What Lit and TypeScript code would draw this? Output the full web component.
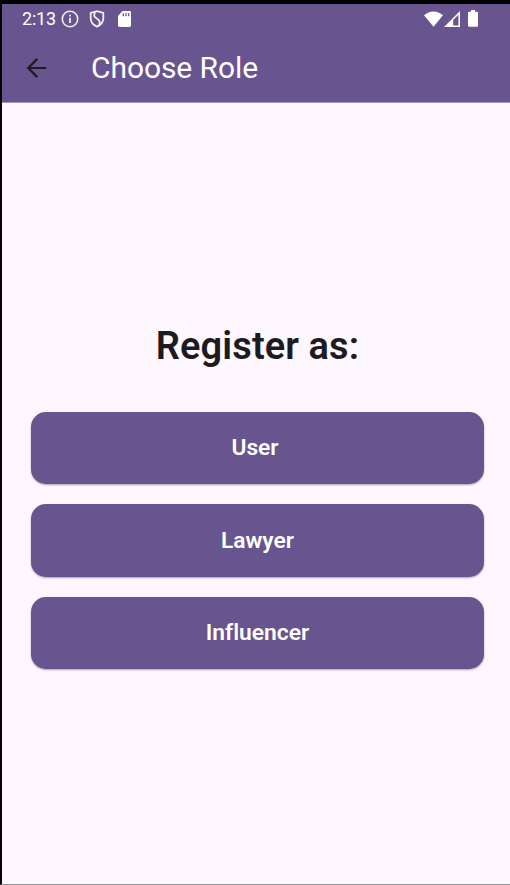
import { LitElement, html, css } from "lit";
import { customElement } from "lit/decorators.js";

@customElement("app-root")
export class AppRoot extends LitElement {
  static styles = css`
    :host {
      display: flex;
      flex-direction: column;
      box-sizing: border-box;
      width: 510px;
      height: 885px;
      overflow: hidden;
      border-top: 4px solid #000;
      border-left: 2px solid #000;
      border-bottom: 1px solid #979398;
      background: #fef7ff;
      font-family: Roboto, "Liberation Sans", sans-serif;
      font-variant-ligatures: none;
      color: #1d1b20;
    }
    svg { display: block; flex: none; }
    .header {
      flex: none;
      height: 98px;
      background: #68548e;
      border-bottom: 1px solid #a598ba;
      color: #fff;
    }
    .status {
      display: flex;
      align-items: center;
      height: 29px;
      padding: 0 32px 0 20px;
    }
    .time { font-size: 18px; line-height: 29px; width: 39px; white-space: nowrap; letter-spacing: -0.2px; }
    .shield { margin-left: 10px; }
    .card { margin-left: 13px; }
    .wifi { margin-left: auto; }
    .signal { margin-left: 1px; }
    .battery { margin-left: 8px; }
    .bar { display: flex; align-items: center; height: 70px; padding-left: 24px; }
    .title { margin: 0 0 0 43px; font-size: 30px; font-weight: 400; line-height: 70px; letter-spacing: -0.08px; white-space: nowrap; }
    .content {
      flex: 1;
      display: flex;
      flex-direction: column;
      padding: 217px 26px 0 29px;
    }
    .heading { margin: 0 0 40px; text-align: center; font-size: 38px; font-weight: 600; letter-spacing: 0.1px; line-height: 52px; white-space: nowrap; }
    .roles { display: flex; flex-direction: column; gap: 20px; }
    .role {
      height: 72.400px;
      border: 0;
      padding: 0;
      border-radius: 15px;
      background: #68548e;
      color: #fff;
      font: 600 22.800px/72px Roboto, "Liberation Sans", sans-serif;
      font-variant-ligatures: none;
      text-align: center;
      box-shadow: 0 1px 2px rgba(0, 0, 0, 0.35);
    }
    .role:first-child { padding-right: 5px; }
  `;

  render() {
    return html`
      <header class="header">
        <div class="status">
          <span class="time">2:13</span>
          <svg width="18" height="18" viewBox="0 0 18 18" fill="none" stroke="#f1eef5">
            <circle cx="9" cy="9" r="7.7" stroke-width="1.6" />
            <path d="M9 7.8v5.2M9 4.7v1.8" stroke-width="1.8" />
          </svg>
          <svg class="shield" width="16" height="18" viewBox="0 0 16 18" fill="none" stroke="#f1eef5" stroke-width="1.8">
            <path d="M8 1.200 14.300 3V8.200C14.300 12.200 11.500 15 8 16.600 4.500 15 1.700 12.200 1.700 8.200V3Z" />
            <path d="M6 2.200C4.300 6.400 5.500 7.200 8.100 8.800C10.700 10.400 11.600 12 10.200 15" />
          </svg>
          <svg class="card" width="13" height="16" viewBox="0 0 13 16">
            <path fill="#fff" d="M4.500 0h7.200A1.300 1.300 0 0 1 13 1.300v13.200a1.400 1.400 0 0 1-1.400 1.400H1.400A1.400 1.400 0 0 1 0 14.500V5Z" />
            <path stroke="#68548e" stroke-width="1.300" d="M5.300 2.200v3M8 2.200v3M10.600 2.200v3" />
          </svg>
          <svg class="wifi" width="19" height="16" viewBox="0 0 19 16">
            <path fill="#fff" d="M0 4.200C5.400-.9 13.600-.9 19 4.200L9.500 15.700Z" />
          </svg>
          <svg class="signal" width="16" height="16" viewBox="0 0 16 16">
            <path fill="#fff" fill-rule="evenodd" d="M16 0V16H0ZM14.400 3.800 9.200 9V14.400H14.400Z" />
          </svg>
          <svg class="battery" width="10" height="17" viewBox="0 0 10 17">
            <path fill="#fff" d="M3 0H7V1.700H8.800Q10 1.700 10 2.900V15.600Q10 16.800 8.800 16.800H1.200Q0 16.800 0 15.600V2.900Q0 1.700 1.200 1.700H3Z" />
          </svg>
        </div>
        <div class="bar">
          <svg width="22" height="22" viewBox="0 0 22 22" fill="none" stroke="#1d1b20" stroke-width="2.200">
            <path d="M20.300 11H2.500M11.300 1.900 2.200 11l9.100 9.100" />
          </svg>
          <h1 class="title">Choose Role</h1>
        </div>
      </header>
      <main class="content">
        <h2 class="heading">Register as:</h2>
        <div class="roles">
          ${["User", "Lawyer", "Influencer"].map((r) => html`<button class="role">${r}</button>`)}
        </div>
      </main>
    `;
  }
}
